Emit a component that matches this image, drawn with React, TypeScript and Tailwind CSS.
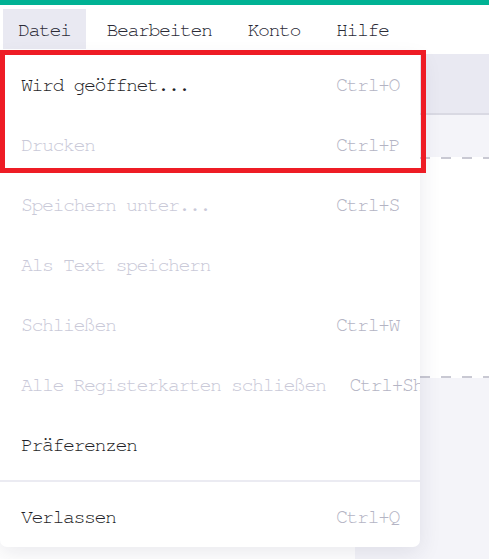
import React from "react";

type Item = {
  label: string;
  shortcut?: string;
  disabled?: boolean;
};

const items: Item[] = [
  { label: "Wird geöffnet...", shortcut: "Ctrl+O" },
  { label: "Drucken", shortcut: "Ctrl+P", disabled: true },
  { label: "Speichern unter...", shortcut: "Ctrl+S", disabled: true },
  { label: "Als Text speichern", disabled: true },
  { label: "Schließen", shortcut: "Ctrl+W", disabled: true },
  { label: "Alle Registerkarten schließen", shortcut: "Ctrl+Shift+W", disabled: true },
  { label: "Präferenzen" },
];

const menus = ["Datei", "Bearbeiten", "Konto", "Hilfe"];

function Row({ item }: { item: Item }) {
  return (
    <div className="flex h-[60px] items-center justify-between pl-[21px] pr-[21px]">
      <span
        className={
          "shrink-0 whitespace-nowrap " +
          (item.disabled ? "text-[#c9c9d8]" : "text-[#1f1f28]")
        }
      >
        {item.label}
      </span>
      {item.shortcut ? (
        <span className="ml-6 shrink-0 whitespace-nowrap text-[#b4b4c4]">{item.shortcut}</span>
      ) : null}
    </div>
  );
}

export default function App() {
  return (
    <div className="relative h-[559px] w-[489px] overflow-hidden bg-white font-[family-name:'Nimbus_Mono_PS','FreeMono','Liberation_Mono',monospace] text-[20px] tracking-[-1.5px]">
      <div className="h-[5px] bg-[#00b294]" />

      <div className="flex h-[45px] items-start gap-[6px] pl-[3px] pt-[4px]">
        {menus.map((m, i) => (
          <div
            key={m}
            className={
              "flex h-[40px] items-center px-[15px] pt-[2px] text-[#2a2a36] " +
              (i === 0 ? "bg-[#e9e9f2]" : "")
            }
          >
            {m}
          </div>
        ))}
      </div>

      {/* page behind the menu */}
      <div className="mt-[4px] h-[59px] bg-[#e9e9f2]" />
      <div className="h-[2px] bg-[#d9d9e3]" />
      <div className="h-[42px] bg-[#f4f4f9]" />
      <div className="h-[2px] bg-[repeating-linear-gradient(90deg,#c9c9d3_0_10px,transparent_10px_21px)]" />
      <div className="h-[217px] bg-white" />
      <div className="h-[2px] bg-[repeating-linear-gradient(90deg,#c9c9d3_0_10px,transparent_10px_21px)]" />
      <div className="flex h-[200px]">
        <div className="w-[355px] bg-white" />
        <div className="flex-1 bg-[#f4f4f9]" />
      </div>

      {/* dropdown */}
      <div className="absolute left-0 top-[55px] w-[420px] overflow-hidden rounded-b-[7px] bg-white shadow-[0_6px_22px_rgba(40,40,80,0.10)]">
        {items.map((it) => (
          <Row key={it.label} item={it} />
        ))}
        <div className="my-[5px] h-[2px] bg-[#ebebf2]" />
        <Row item={{ label: "Verlassen", shortcut: "Ctrl+Q" }} />
      </div>

      {/* highlight box */}
      <div className="pointer-events-none absolute left-0 top-[50px] h-[123px] w-[426px] border-[5px] border-[#ee1c25]" />
    </div>
  );
}
